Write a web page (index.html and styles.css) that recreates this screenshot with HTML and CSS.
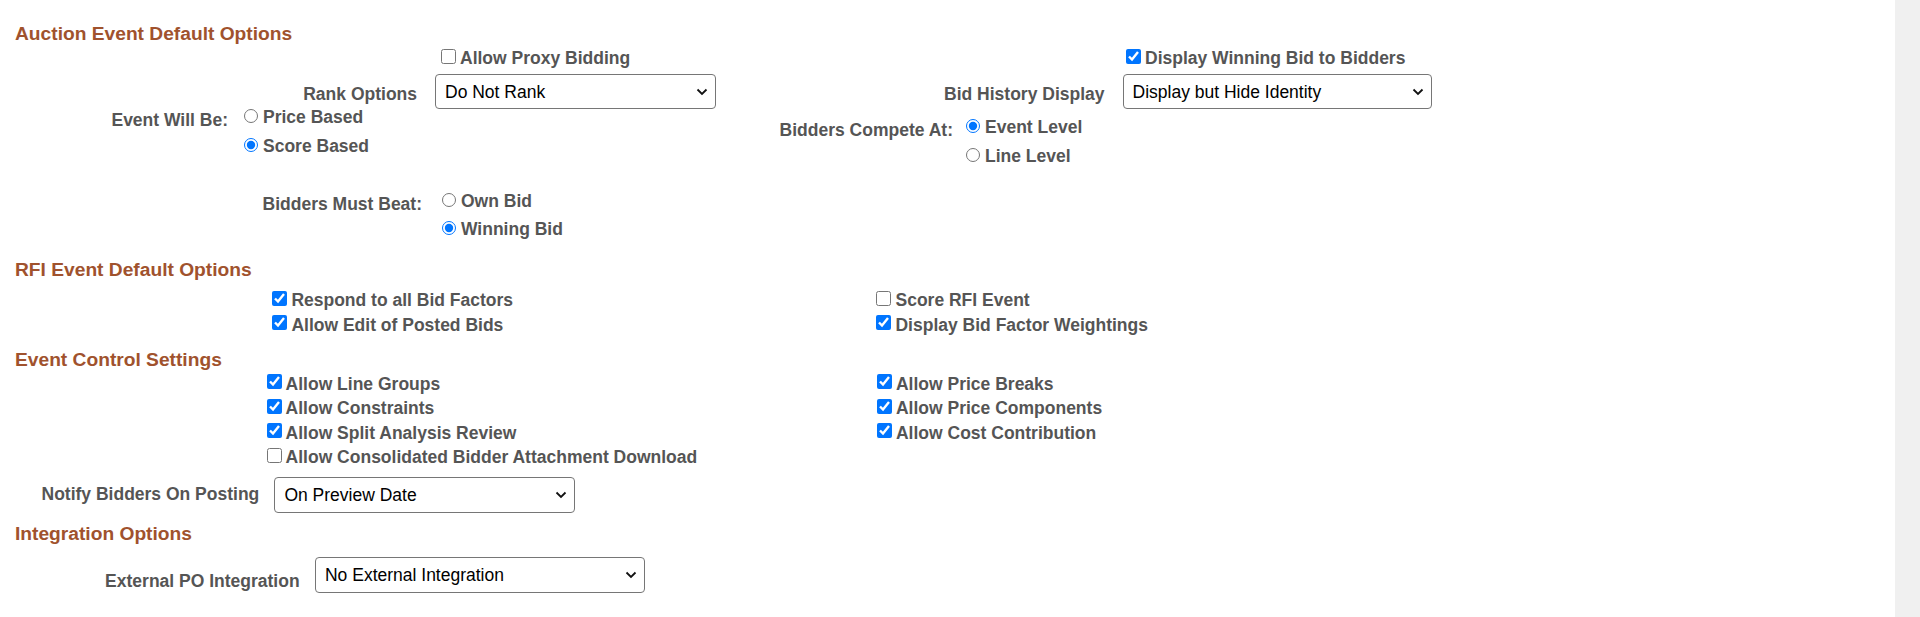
FILE: index.html
```html
<!DOCTYPE html>
<html lang="en">
    <head>
        <meta charset="UTF-8">
        <meta name="viewport" content="width=device-width, initial-scale=1.0">
        <title>Event Default Options</title>

        <link rel="stylesheet" href="styles.css">
    </head>

    <body>
        <div id="page">
            <div id="main-windows">

                <h2 class="section-title">Auction Event Default Options</h2>
                <div class="auction">
                    <div class="col col-left">
                        <label class="check proxy"><input type="checkbox">Allow Proxy Bidding</label>

                        <div class="field rank">
                            <span class="field-label">Rank Options</span>
                            <div class="select-wrap">
                                <select class="dropdown">
                                    <option>Do Not Rank</option>
                                    <option>Rank Bidders</option>
                                </select>
                                <svg class="chevron" width="12" height="8" viewBox="0 0 12 8"><path d="M1.5 1.5 L6 6 L10.5 1.5"/></svg>
                            </div>
                        </div>

                        <div class="group will-be">
                            <span class="field-label">Event Will Be:</span>
                            <div class="choices">
                                <label class="radio"><input type="radio" name="willbe">Price Based</label>
                                <label class="radio"><input type="radio" name="willbe" checked>Score Based</label>
                            </div>
                        </div>

                        <div class="group must-beat">
                            <span class="field-label">Bidders Must Beat:</span>
                            <div class="choices">
                                <label class="radio"><input type="radio" name="beat">Own Bid</label>
                                <label class="radio"><input type="radio" name="beat" checked>Winning Bid</label>
                            </div>
                        </div>
                    </div>

                    <div class="col col-right">
                        <label class="check winning"><input type="checkbox" checked>Display Winning Bid to Bidders</label>

                        <div class="field history">
                            <span class="field-label">Bid History Display</span>
                            <div class="select-wrap">
                                <select class="dropdown">
                                    <option>Display but Hide Identity</option>
                                    <option>Display All</option>
                                    <option>Do Not Display</option>
                                </select>
                                <svg class="chevron" width="12" height="8" viewBox="0 0 12 8"><path d="M1.5 1.5 L6 6 L10.5 1.5"/></svg>
                            </div>
                        </div>

                        <div class="group compete">
                            <span class="field-label">Bidders Compete At:</span>
                            <div class="choices">
                                <label class="radio"><input type="radio" name="compete" checked>Event Level</label>
                                <label class="radio"><input type="radio" name="compete">Line Level</label>
                            </div>
                        </div>
                    </div>
                </div>

                <h2 class="section-title rfi-title">RFI Event Default Options</h2>
                <div class="check-grid rfi">
                    <label class="check"><input type="checkbox" checked>Respond to all Bid Factors</label>
                    <label class="check"><input type="checkbox">Score RFI Event</label>
                    <label class="check"><input type="checkbox" checked>Allow Edit of Posted Bids</label>
                    <label class="check"><input type="checkbox" checked>Display Bid Factor Weightings</label>
                </div>

                <h2 class="section-title control-title">Event Control Settings</h2>
                <div class="check-grid control">
                    <label class="check"><input type="checkbox" checked>Allow Line Groups</label>
                    <label class="check"><input type="checkbox" checked>Allow Price Breaks</label>
                    <label class="check"><input type="checkbox" checked>Allow Constraints</label>
                    <label class="check"><input type="checkbox" checked>Allow Price Components</label>
                    <label class="check"><input type="checkbox" checked>Allow Split Analysis Review</label>
                    <label class="check"><input type="checkbox" checked>Allow Cost Contribution</label>
                    <label class="check"><input type="checkbox">Allow Consolidated Bidder Attachment Download</label>
                </div>

                <div class="field notify">
                    <span class="field-label">Notify Bidders On Posting</span>
                    <div class="select-wrap">
                        <select class="dropdown">
                            <option>On Preview Date</option>
                            <option>On Start Date</option>
                        </select>
                        <svg class="chevron" width="12" height="8" viewBox="0 0 12 8"><path d="M1.5 1.5 L6 6 L10.5 1.5"/></svg>
                    </div>
                </div>

                <h2 class="section-title integration-title">Integration Options</h2>
                <div class="field external">
                    <span class="field-label">External PO Integration</span>
                    <div class="select-wrap">
                        <select class="dropdown">
                            <option>No External Integration</option>
                            <option>Send to External System</option>
                        </select>
                        <svg class="chevron" width="12" height="8" viewBox="0 0 12 8"><path d="M1.5 1.5 L6 6 L10.5 1.5"/></svg>
                    </div>
                </div>

            </div>
            <div class="gutter"></div>
        </div>
    </body>
</html>
```

FILE: styles.css
```css
body{
    margin: 0;
    background-color: #fff;
    color: #555;
    font-family: "Liberation Sans", Arial, Helvetica, sans-serif;
    font-size: 17.5px;
    font-weight: bold;
}
#page{
    display: flex;
    height: 100vh;
}
#main-windows{
    flex: 1;
    padding-top: 21px;
}
.gutter{
    width: 25px;
    background-color: #f0f0f0;
}

.section-title{
    margin: 0;
    padding-left: 15px;
    color: #a0522d;
    font-size: 19.2px;
    line-height: 25px;
}
.rfi-title{
    margin-top: 19.1px;
}
.control-title{
    margin-top: 9.6px;
}
.integration-title{
    margin-top: 8.2px;
}

/* checkboxes and radios */
.check{
    display: flex;
    align-items: flex-start;
    gap: 4px;
    line-height: 24.4px;
}
.check input{
    width: 15px;
    height: 15px;
    margin: 2.6px 0 0;
}
.radio{
    display: flex;
    align-items: flex-start;
    gap: 5px;
    line-height: 17px;
}
.radio input{
    width: 14px;
    height: 14px;
    margin: 0;
}
.choices{
    display: flex;
    flex-direction: column;
    gap: 11.7px;
}

/* label + control rows */
.field,
.group{
    display: flex;
    align-items: flex-start;
}
.field-label{
    text-align: right;
    line-height: 24.4px;
}
.group .field-label{
    line-height: 17px;
}
.select-wrap{
    position: relative;
}
.dropdown{
    display: block;
    width: 100%;
    height: 35px;
    padding: 0 30px 0 9px;
    border: 1px solid #767676;
    border-radius: 4px;
    background-color: #fff;
    color: #000;
    font-family: "Liberation Sans", Arial, Helvetica, sans-serif;
    font-size: 17.5px;
    font-weight: normal;
    appearance: none;
    -webkit-appearance: none;
}
.chevron{
    position: absolute;
    right: 8px;
    top: 50%;
    transform: translateY(-50%);
    pointer-events: none;
}
.chevron path{
    fill: none;
    stroke: #111;
    stroke-width: 1.8;
}

/* auction section */
.auction{
    display: flex;
}
.col-left{
    width: 760px;
}
.col-right{
    flex: 1;
}
.proxy{
    margin-left: 441px;
}
.winning{
    margin-left: 366px;
}
.field.rank,
.field.history{
    margin-top: 3.9px;
}
.rank .field-label{
    width: 417px;
    margin-right: 18px;
    padding-top: 8.1px;
}
.rank .select-wrap{
    width: 280.5px;
}
.history .field-label{
    width: 344.5px;
    margin-right: 18px;
    padding-top: 8.1px;
}
.history .select-wrap{
    width: 309px;
}
.will-be .field-label{
    width: 228px;
    margin-right: 16px;
    padding-top: 2.7px;
}
.must-beat{
    margin-top: 37.7px;
}
.must-beat .field-label{
    width: 422px;
    margin-right: 20px;
    padding-top: 3.7px;
}
.compete{
    margin-top: 10.1px;
}
.compete .field-label{
    width: 193px;
    margin-right: 13px;
    padding-top: 2.7px;
}

/* checkbox grids */
.check-grid{
    display: grid;
}
.rfi{
    grid-template-columns: 604.1px auto;
    margin-top: 5.9px;
    padding-left: 272.4px;
}
.control{
    grid-template-columns: 610.4px auto;
    padding-left: 266.6px;
}

/* bottom rows */
.notify{
    margin-top: 7.9px;
}
.notify .field-label{
    width: 259.3px;
    margin-right: 15.1px;
    padding-top: 4.4px;
}
.notify .select-wrap{
    width: 301px;
}
.notify .dropdown{
    height: 36px;
}
.external{
    margin-top: 10.8px;
}
.external .field-label{
    width: 299.6px;
    margin-right: 15.4px;
    padding-top: 11.7px;
}
.external .select-wrap{
    width: 329.7px;
}
.external .dropdown{
    height: 35.4px;
}
```
